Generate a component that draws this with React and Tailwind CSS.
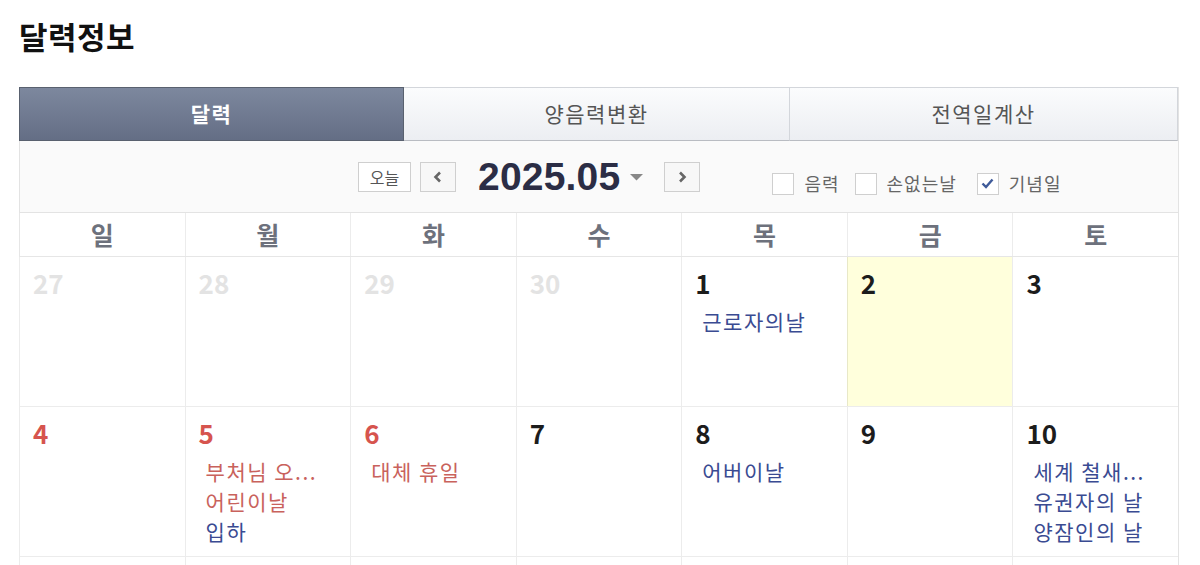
import React from "react";

const FONT = { fontFamily: '"Noto Sans CJK KR", "Noto Sans", sans-serif' };

const days = ["일", "월", "화", "수", "목", "금", "토"];

const weeks = [
  [
    { d: 27, other: true },
    { d: 28, other: true },
    { d: 29, other: true },
    { d: 30, other: true },
    { d: 1, ev: [{ t: "근로자의날", c: "blue" }] },
    { d: 2, today: true },
    { d: 3 },
  ],
  [
    { d: 4, red: true },
    {
      d: 5,
      red: true,
      ev: [
        { t: "부처님 오...", c: "red" },
        { t: "어린이날", c: "red" },
        { t: "입하", c: "blue" },
      ],
    },
    { d: 6, red: true, ev: [{ t: "대체 휴일", c: "red" }] },
    { d: 7 },
    { d: 8, ev: [{ t: "어버이날", c: "blue" }] },
    { d: 9 },
    {
      d: 10,
      ev: [
        { t: "세계 철새...", c: "blue" },
        { t: "유권자의 날", c: "blue" },
        { t: "양잠인의 날", c: "blue" },
      ],
    },
  ],
  [{}, {}, {}, {}, {}, {}, {}],
];

function Checkbox({ checked, label }) {
  return (
    <div className="flex items-center gap-[10px]">
      <span className="flex h-[22px] w-[22px] items-center justify-center border border-[#cfcfcf] bg-white">
        {checked && (
          <svg width="13" height="11" viewBox="0 0 13 11">
            <path d="M1.5 5.5 L5 9 L11.5 1.5" fill="none" stroke="#3f5b9a" strokeWidth="2.4" />
          </svg>
        )}
      </span>
      <span className="text-[18px] tracking-[1px] text-[#666]">{label}</span>
    </div>
  );
}

function NavBtn({ dir }) {
  return (
    <button className="flex h-[30px] w-[36px] items-center justify-center border border-[#cfcfcf] bg-[#f7f7f7]">
      <svg width="10" height="12" viewBox="0 0 10 12">
        {dir === "left" ? (
          <path d="M7 1.5 L2.5 6 L7 10.5" fill="none" stroke="#666" strokeWidth="2.6" />
        ) : (
          <path d="M3 1.5 L7.5 6 L3 10.5" fill="none" stroke="#666" strokeWidth="2.6" />
        )}
      </svg>
    </button>
  );
}

export default function App() {
  return (
    <div className="min-h-screen bg-white pl-[19px] pr-[21px] pt-[14px]" style={FONT}>
      <h1 className="text-[31px] font-bold leading-[44px] tracking-[0.5px] text-[#111]">달력정보</h1>

      <div className="mt-[29px] border-r border-[#e3e3e3]">
        {/* tabs */}
        <div className="grid h-[54px] grid-cols-[385px_386px_1fr]">
          <div className="flex items-center justify-center border border-[#59616f] bg-gradient-to-b from-[#7d889e] to-[#646e85] text-[21px] font-bold tracking-[1.5px] text-white">
            달력
          </div>
          <div className="flex items-center justify-center border-y border-r border-[#d3d6db] border-b-[#b9bcc2] bg-gradient-to-b from-[#fbfcfd] to-[#eceef2] text-[21px] tracking-[1.5px] text-[#555]">
            양음력변환
          </div>
          <div className="flex items-center justify-center border-y border-r border-[#d3d6db] border-b-[#b9bcc2] bg-gradient-to-b from-[#fbfcfd] to-[#eceef2] text-[21px] tracking-[1.5px] text-[#555]">
            전역일계산
          </div>
        </div>

        {/* control bar */}
        <div className="flex h-[72px] items-center border-b border-l border-[#e3e3e3] bg-[#fafafa] pl-[338px]">
          <button className="flex h-[30px] w-[53px] items-center justify-center border border-[#cfcfcf] bg-white text-[16px] text-[#555]">
            오늘
          </button>
          <div className="ml-[9px]">
            <NavBtn dir="left" />
          </div>
          <div
            className="ml-[22px] text-[39px] font-bold leading-none tracking-[0.2px] text-[#2b2d45]"
            style={{ fontFamily: '"Liberation Sans", Arial, sans-serif' }}
          >
            2025.05
          </div>
          <svg className="ml-[9px]" width="15" height="8" viewBox="0 0 15 8">
            <path d="M1 1 L14 1 L7.5 7.5 Z" fill="#888" />
          </svg>
          <div className="ml-[20px]">
            <NavBtn dir="right" />
          </div>
          <div className="ml-[72px] flex items-center pt-[14px]">
            <Checkbox label="음력" />
            <div className="ml-[15px]">
              <Checkbox label="손없는날" />
            </div>
            <div className="ml-[20px]">
              <Checkbox checked label="기념일" />
            </div>
          </div>
        </div>

        {/* day header */}
        <div className="grid h-[44px] grid-cols-7 border-b border-[#e6e6e6]">
          {days.map((d, i) => (
            <div
              key={d}
              className={`flex items-center justify-center text-[25px] font-bold text-[#6d717c] ${
                i === 0 ? "border-l border-[#e6e6e6]" : "border-l border-[#ececec]"
              }`}
            >
              {d}
            </div>
          ))}
        </div>

        {/* weeks */}
        {weeks.map((w, wi) => (
          <div key={wi} className="grid h-[150px] grid-cols-7 border-b border-[#ececec]">
            {w.map((c, ci) => (
              <div
                key={ci}
                className={`border-l pl-[13px] pt-[8px] ${
                  c.today ? "border-[#e8e8c8] bg-[#ffffdc]" : "border-[#ececec] bg-white"
                }`}
              >
                {c.d !== undefined && (
                  <div
                    className={`text-[26px] font-bold leading-[36px] ${
                      c.other ? "text-[#e3e3e3]" : c.red ? "text-[#d6544e]" : "text-[#1c1c1c]"
                    }`}
                  >
                    {c.d}
                  </div>
                )}
                {c.ev && (
                  <div className="mt-[5px] pl-[7px]">
                    {c.ev.map((e, ei) => (
                      <div
                        key={ei}
                        className={`whitespace-nowrap text-[21px] leading-[30px] tracking-[1.5px] ${
                          e.c === "red" ? "text-[#c9625c]" : "text-[#3a4b92]"
                        }`}
                      >
                        {e.t}
                      </div>
                    ))}
                  </div>
                )}
              </div>
            ))}
          </div>
        ))}
      </div>
    </div>
  );
}
